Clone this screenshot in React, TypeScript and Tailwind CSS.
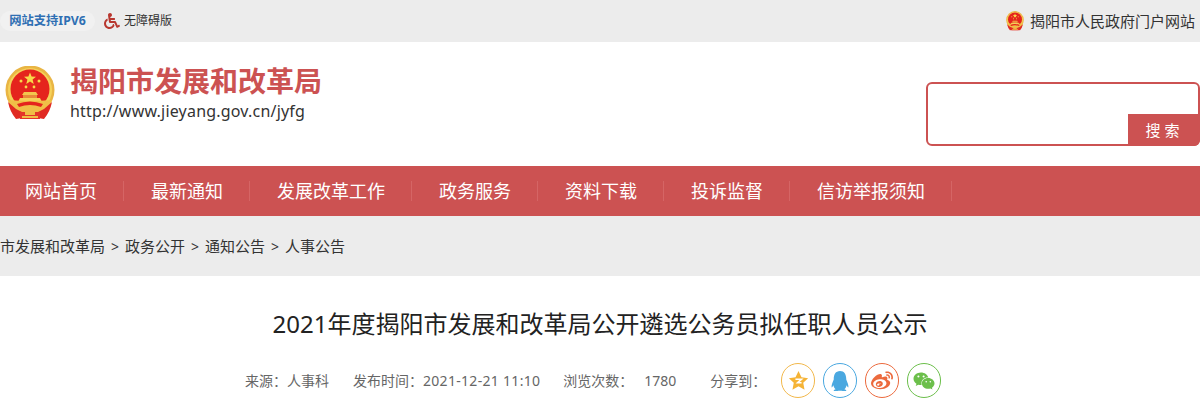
import { FaQq, FaWeibo, FaWeixin, FaWheelchair } from 'react-icons/fa';

const navItems = ['网站首页', '最新通知', '发展改革工作', '政务服务', '资料下载', '投诉监督', '信访举报须知'];
const crumbs = ['市发展和改革局', '政务公开', '通知公告', '人事公告'];

function Emblem({ className }: { className?: string }) {
  return (
    <svg viewBox="0 0 50 54" className={className}>
      <circle cx="25" cy="24" r="24.5" fill="#e9b544" />
      <circle cx="25" cy="24" r="22" fill="#f5d25a" />
      <circle cx="25" cy="23" r="19.5" fill="#e5241d" />
      {/* stars */}
      <polygon points="25,6.5 26.6,10.6 31,10.8 27.6,13.6 28.7,17.9 25,15.5 21.3,17.9 22.4,13.6 19,10.8 23.4,10.6" fill="#f8d84a" />
      <circle cx="16" cy="15" r="1.5" fill="#f8d84a" />
      <circle cx="34" cy="15" r="1.5" fill="#f8d84a" />
      <circle cx="21" cy="21" r="1.4" fill="#f8d84a" />
      <circle cx="29" cy="21" r="1.4" fill="#f8d84a" />
      {/* gate */}
      <polygon points="19,26 31,26 33,29 17,29" fill="#f2c64e" />
      <rect x="18" y="29" width="14" height="3" fill="#e88a3a" />
      <polygon points="15,32 35,32 37,36 13,36" fill="#f5d25a" />
      {/* lower band */}
      <path d="M3 34 Q25 36 47 34 L44 43 Q25 50 6 43 Z" fill="#f0bf47" />
      <path d="M12 38 Q25 33 38 38 L36 41 Q25 37 14 41 Z" fill="#e5241d" />
      {/* ribbons */}
      <path d="M3 36 L11 43 L17 46 L17 52 L11 53 Q5 46 3 36 Z" fill="#e02a22" />
      <path d="M47 36 L39 43 L33 46 L33 52 L39 53 Q45 46 47 36 Z" fill="#e02a22" />
      <rect x="15" y="46" width="20" height="7" fill="#e5362a" />
      <rect x="20" y="44" width="10" height="5" fill="#f0bf47" />
      <rect x="17" y="50" width="16" height="2" fill="#f0bf47" />
    </svg>
  );
}

function ShareIcon({ color, children }: { color: string; children: React.ReactNode }) {
  return (
    <div className="flex h-[35px] w-[34px] items-center justify-center rounded-full border" style={{ borderColor: color, color }}>
      {children}
    </div>
  );
}

export default function App() {
  return (
    <div className="h-[400px] w-[1200px] overflow-hidden bg-white font-['Noto_Sans','Noto_Sans_CJK_SC',sans-serif] text-[#333]">
      {/* Top bar */}
      <div className="flex h-[42px] items-center justify-between bg-[#ececec] pr-[5px]">
        <div className="flex items-center">
          <div className="flex h-[20px] w-[95px] items-center justify-center rounded-[10px] bg-[#f1f1f1] text-[12.3px] font-bold text-[#2f6fb3]">
            网站支持IPV6
          </div>
          <FaWheelchair size={16} className="ml-[9px] text-[#b8372f]" />
          <span className="ml-[4px] text-[12px]">无障碍版</span>
        </div>
        <div className="flex items-center">
          <Emblem className="h-[20px] w-[18px]" />
          <span className="ml-[6px] text-[15px]">揭阳市人民政府门户网站</span>
        </div>
      </div>

      {/* Header */}
      <div className="flex h-[124px] items-start justify-between">
        <div className="flex pt-[24px] pl-[5px]">
          <Emblem className="h-[54px] w-[50px]" />
          <div className="-mt-[2px] ml-[15px]">
            <div className="text-[28px] leading-[35px] font-bold text-[#cc5252]">揭阳市发展和改革局</div>
            <div className="text-[16px] leading-[24px] tracking-[0.2px]">http://www.jieyang.gov.cn/jyfg</div>
          </div>
        </div>
        <div className="mt-[40px] flex h-[64px] w-[274px] items-end justify-end rounded-[6px] border-2 border-[#cc5252]">
          <div className="-mr-[2px] -mb-[2px] flex h-[32px] w-[72px] items-center justify-center rounded-br-[6px] bg-[#cc5252] pl-[1px] text-[15px] tracking-[4px] text-white">
            搜索
          </div>
        </div>
      </div>

      {/* Nav */}
      <div className="flex h-[50px] items-center bg-[#cc5252] pl-[25px] text-[18px] text-white">
        {navItems.map((item) => (
          <div key={item} className="mr-[27px] border-r border-[#d56565] pr-[26px] leading-[20px]">
            {item}
          </div>
        ))}
      </div>

      {/* Breadcrumb */}
      <div className="flex h-[60px] items-center bg-[#ececec] text-[15px]">
        {crumbs.map((c, i) => (
          <div key={c} className="flex items-center">
            {i > 0 && <span className="w-[20px] text-center text-[14px]">&gt;</span>}
            <span>{c}</span>
          </div>
        ))}
      </div>

      {/* Article head */}
      <h1 className="mt-[30px] text-center text-[24px] leading-[36px] text-[#222]">
        2021年度揭阳市发展和改革局公开遴选公务员拟任职人员公示
      </h1>
      <div className="mt-[21px] flex items-center pl-[245px] text-[14px] text-[#666]">
        <span>{'来源\uFF1A人事科'}</span>
        <span className="ml-[24px]">{'发布时间\uFF1A'}</span>
        <span className="tracking-[0.3px]">2021-12-21 11:10</span>
        <span className="ml-[23px]">{'浏览次数\uFF1A'}</span>
        <span className="ml-[11px]">1780</span>
        <span className="ml-[34px]">{'分享到\uFF1A'}</span>
        <div className="ml-[15px] flex gap-[8px]">
          <ShareIcon color="#f2b84b">
            <svg viewBox="0 0 24 24" className="h-[21px] w-[21px]">
              <polygon points="12,1 15.4,8.4 23,9.3 17.4,14.7 18.9,22.5 12,18.6 5.1,22.5 6.6,14.7 1,9.3 8.6,8.4" fill="#f5b335" />
              <path d="M8.5 10.5h7l-4.5 4h4.5" fill="none" stroke="#fff" strokeWidth="1.8" />
            </svg>
          </ShareIcon>
          <ShareIcon color="#4aa8e0">
            <FaQq size={20} />
          </ShareIcon>
          <ShareIcon color="#ec6a3d">
            <FaWeibo size={22} />
          </ShareIcon>
          <ShareIcon color="#6cbf4b">
            <FaWeixin size={22} />
          </ShareIcon>
        </div>
      </div>
    </div>
  );
}
